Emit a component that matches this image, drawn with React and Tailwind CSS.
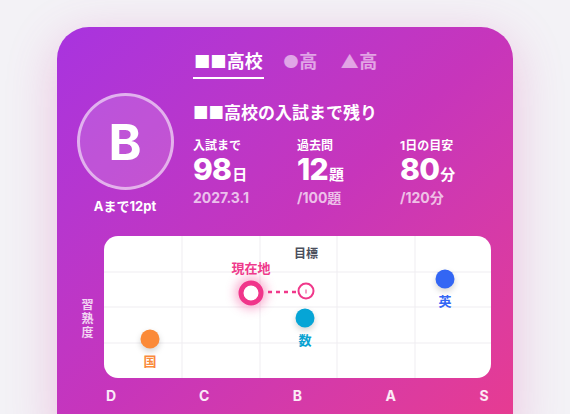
import React from "react";

const font = { fontFamily: 'Inter, "Noto Sans CJK JP", sans-serif' };

const stats = [
  { label: "入試まで", value: "98", unit: "日", sub: "2027.3.1" },
  { label: "過去問", value: "12", unit: "題", sub: "/100題" },
  { label: "1日の目安", value: "80", unit: "分", sub: "/120分" },
];

const Dot = ({ x, y, color, label, textColor }) => (
  <>
    <div
      className={`absolute w-[19px] h-[19px] rounded-full -translate-x-1/2 -translate-y-1/2 shadow-[0_3px_6px_rgba(0,0,0,0.18)] ${color}`}
      style={{ left: x, top: y }}
    />
    <div
      className={`absolute -translate-x-1/2 -translate-y-1/2 text-[13px] font-bold leading-none ${textColor}`}
      style={{ left: x, top: y + 22 }}
    >
      {label}
    </div>
  </>
);

export default function App() {
  return (
    <div className="min-h-[414px] h-[414px] overflow-hidden bg-[#f3f2f6]" style={font}>
      <div className="mx-auto mt-[27px] w-[456px] h-[420px] rounded-[32px] bg-gradient-to-br from-[#a833df] via-[#c735bb] to-[#e93b8e] shadow-[0_12px_50px_rgba(214,70,170,0.28)] px-5 pt-[24px] text-white">
        {/* Tabs */}
        <div className="flex justify-center items-start gap-[19px]">
          <div className="flex flex-col items-center">
            <span className="text-[18px] font-bold leading-[22px]">■■高校</span>
            <div className="mt-[4px] h-[2px] w-[71px] bg-white" />
          </div>
          <span className="text-[18px] font-bold leading-[22px] text-white/55">●高</span>
          <span className="ml-[4px] text-[18px] font-bold leading-[22px] text-white/55">▲高</span>
        </div>

        {/* Header */}
        <div className="mt-[14px] flex gap-[20px]">
          <div className="flex flex-col items-center w-[96px]">
            <div className="w-[97px] h-[97px] rounded-full border-[3px] border-white/55 bg-white/15 flex items-center justify-center">
              <span className="text-[50px] font-bold leading-none">B</span>
            </div>
            <div className="mt-[10px] text-[13px] font-bold leading-none">Aまで12pt</div>
          </div>
          <div className="pt-[10px]">
            <div className="text-[17px] font-bold leading-[20px]">■■高校の入試まで残り</div>
            <div className="mt-[16px] grid grid-cols-[104px_103px_80px]">
              {stats.map((s) => (
                <div key={s.label}>
                  <div className="text-[12px] font-bold leading-[14px]">{s.label}</div>
                  <div className="mt-[2px] flex items-baseline leading-[28px]">
                    <span className="text-[30px] font-extrabold tracking-tight">{s.value}</span>
                    <span className="ml-[1px] text-[15px] font-bold">{s.unit}</span>
                  </div>
                  <div className="mt-[2px] text-[14px] font-bold leading-none text-white/70">{s.sub}</div>
                </div>
              ))}
            </div>
          </div>
        </div>

        {/* Chart */}
        <div className="mt-[23px] flex -mr-[2px]">
          <div className="w-[27px] flex flex-col items-center justify-center pr-[6px] pt-[24px] text-[12px] font-bold leading-[14px] text-white/80">
            <span>習</span>
            <span>熟</span>
            <span>度</span>
          </div>
          <div className="relative w-[387px] h-[142px] rounded-[14px] bg-white overflow-hidden">
            <svg className="absolute inset-0" width="387" height="142">
              {[78, 156, 233, 311].map((x) => (
                <line key={x} x1={x} y1="0" x2={x} y2="142" stroke="#efedf1" strokeWidth="1" />
              ))}
              {[36, 71, 107].map((y) => (
                <line key={y} x1="0" y1={y} x2="387" y2={y} stroke="#efedf1" strokeWidth="1" />
              ))}
              <line x1="164" y1="56" x2="194" y2="56" stroke="#f0388a" strokeWidth="2.5" strokeDasharray="4 4" />
            </svg>

            <div className="absolute left-[202px] top-[18px] -translate-x-1/2 -translate-y-1/2 text-[12px] font-bold text-[#4b4f5c] leading-none">目標</div>
            <div className="absolute left-[202px] top-[55px] -translate-x-1/2 -translate-y-1/2 w-[17px] h-[17px] rounded-full border-2 border-[#f0388a] bg-white flex items-center justify-center">
              <div className="w-[1px] h-[4px] bg-[#f0388a]" />
            </div>

            <div className="absolute left-[147px] top-[32px] -translate-x-1/2 -translate-y-1/2 text-[13px] font-bold text-[#ef3a8c] leading-none">現在地</div>
            <div className="absolute left-[147px] top-[57px] -translate-x-1/2 -translate-y-1/2 w-[25px] h-[25px] rounded-full border-[5px] border-[#f0358a] bg-white shadow-[0_0_10px_4px_rgba(240,53,138,0.35)]" />

            <Dot x={46} y={103} color="bg-[#fb8a38]" label="国" textColor="text-[#f98a3c]" />
            <Dot x={201} y={82} color="bg-[#06a5d6]" label="数" textColor="text-[#0aa3d2]" />
            <Dot x={341} y={43} color="bg-[#3366f4]" label="英" textColor="text-[#3366f4]" />
          </div>
        </div>

        {/* X axis */}
        <div className="mt-[11px] ml-[27px] w-[387px] flex justify-between">
          {["D", "C", "B", "A", "S"].map((l) => (
            <span key={l} className="w-[14px] text-center text-[14px] font-bold leading-none text-white/90">{l}</span>
          ))}
        </div>
      </div>
    </div>
  );
}
